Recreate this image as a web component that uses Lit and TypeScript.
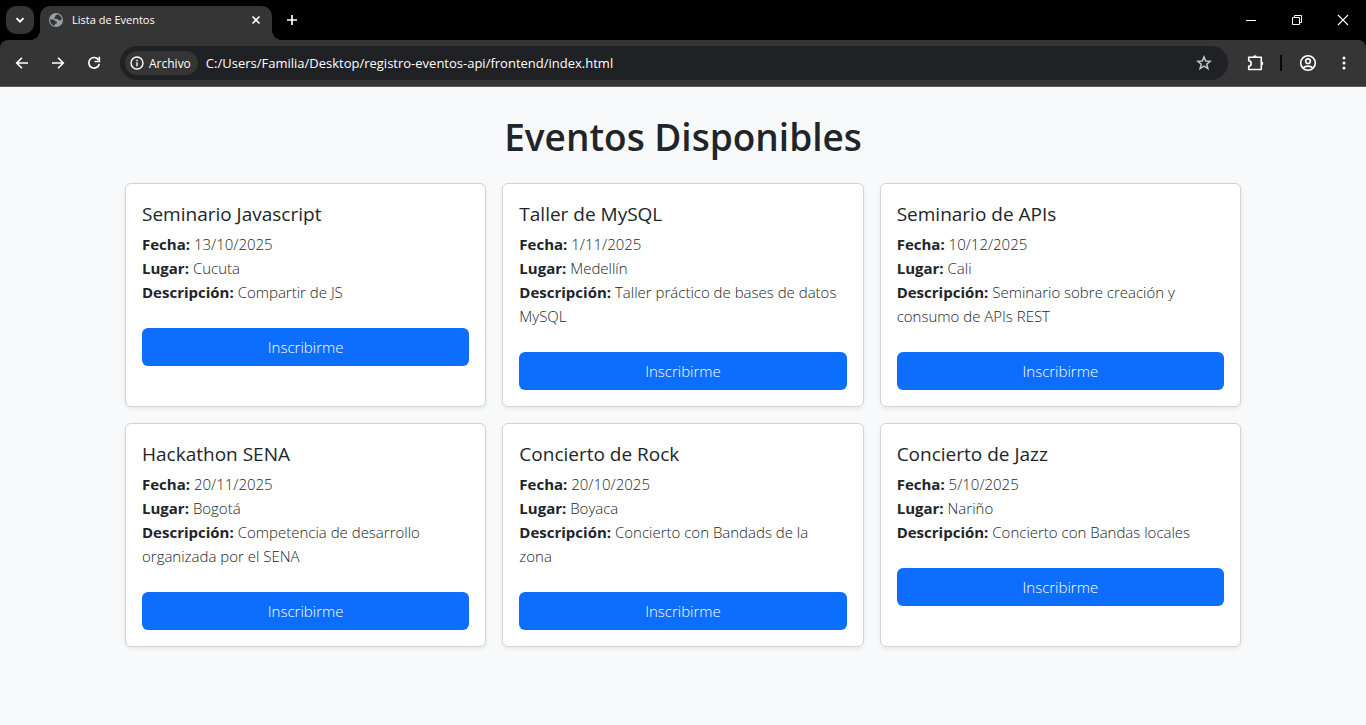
import { LitElement, html, css, svg } from "lit";
import { customElement, property } from "lit/decorators.js";

interface Evento {
  nombre: string;
  fecha: string;
  lugar: string;
  descripcion: string;
}

const EVENTOS: Evento[] = [
  { nombre: "Seminario Javascript", fecha: "13/10/2025", lugar: "Cucuta", descripcion: "Compartir de JS" },
  { nombre: "Taller de MySQL", fecha: "1/11/2025", lugar: "Medellín", descripcion: "Taller práctico de bases de datos MySQL" },
  { nombre: "Seminario de APIs", fecha: "10/12/2025", lugar: "Cali", descripcion: "Seminario sobre creación y consumo de APIs REST" },
  { nombre: "Hackathon SENA", fecha: "20/11/2025", lugar: "Bogotá", descripcion: "Competencia de desarrollo organizada por el SENA" },
  { nombre: "Concierto de Rock", fecha: "20/10/2025", lugar: "Boyaca", descripcion: "Concierto con Bandads de la zona" },
  { nombre: "Concierto de Jazz", fecha: "5/10/2025", lugar: "Nariño", descripcion: "Concierto con Bandas locales" },
];

const icon = (size: number, body: unknown) => html`<svg
  width=${size} height=${size} viewBox="0 0 ${size} ${size}"
  fill="none" stroke="currentColor" aria-hidden="true">${body}</svg>`;

const ICONS = {
  chevron: icon(16, svg`<path d="M4.5 6.2 8 9.7l3.5-3.5" stroke-width="1.9"/>`),
  globe: icon(16, svg`<circle cx="8" cy="8" r="7" fill="#9aa0a6" stroke="none"/>
    <path d="M2 7.4h2.600c1.600 0 2.600.8 2.800 2.200h1.300v2.200H6.900v1.900C4 13.200 1.900 10.800 2 7.400Z M7.200 3.800 9.600 2.300c2 .6 3.500 2.200 4.100 4.200l-.5 1.800h-2.400l-1.400-1.400H7.200L6 5.600l1.200-.4Z" fill="#353535" stroke="none"/>`),
  close: icon(16, svg`<path d="m4.500 4.500 7 7m0-7-7 7" stroke-width="1.600"/>`),
  plus: icon(16, svg`<path d="M8 3v10M3 8h10" stroke-width="1.700"/>`),
  minimize: icon(16, svg`<path d="M3 8.500h10"/>`),
  restore: icon(16, svg`<path d="M3.500 5.500h7v7h-7zM5.500 5.500v-2h7v7h-2"/>`),
  closeWindow: icon(16, svg`<path d="m3 3 10 10M13 3 3 13" stroke-width="1.100"/>`),
  back: icon(16, svg`<path d="M14 8H3M8 2.700 2.700 8 8 13.300" stroke-width="1.600"/>`),
  forward: icon(16, svg`<path d="M2 8h11M8 2.700 13.300 8 8 13.300" stroke-width="1.600"/>`),
  reload: icon(16, svg`<path d="M12.600 5A5.300 5.300 0 1 0 13.300 8.800" stroke-width="1.700"/><path d="M13.300 1.800v4.700H8.600" stroke-width="1.700"/>`),
  info: icon(14, svg`<circle cx="7" cy="7" r="6" stroke-width="1.400"/><path d="M7 6.200V10.300M7 3.700v1.500" stroke-width="1.400"/>`),
  star: icon(16, svg`<path d="m8 1.900 1.700 4.100 4.500.3-3.500 2.900 1.200 4.400L8 11.200l-3.900 2.400 1.200-4.400-3.500-2.900 4.500-.3Z" stroke-width="1.500"/>`),
  puzzle: icon(20, svg`<path d="M3.700 4.300H16.300V16.500H3.700V13.200C5.200 13 6.200 11.900 6.200 10.400S5.200 7.800 3.700 7.600Z" stroke-width="1.600" stroke-linejoin="round"/>
    <path d="M8 4.300a2 2 0 0 1 4 0ZM16.300 8.400a2 2 0 0 1 0 4Z" fill="currentColor" stroke="none"/>`),
  profile: icon(18, svg`<circle cx="9" cy="9" r="7.300" stroke-width="1.600"/><circle cx="9" cy="7.200" r="2.300" stroke-width="1.600"/><path d="M3.900 14c2.900-2.500 7.300-2.500 10.200 0" stroke-width="1.600"/>`),
  menu: icon(16, svg`<g fill="currentColor" stroke="none"><circle cx="8" cy="2.900" r="1.500"/><circle cx="8" cy="8" r="1.500"/><circle cx="8" cy="13.100" r="1.500"/></g>`),
};

@customElement("browser-chrome")
class BrowserChrome extends LitElement {
  static styles = css`
    :host { display: block; color: #fff; background: #000; font-family: "Open Sans", "Noto Sans", sans-serif; }
    svg { display: block; flex: none; }
    button { display: grid; place-items: center; padding: 0; border: 0; background: none; color: inherit; font: inherit; }
    .strip { display: flex; align-items: center; height: 40px; padding-left: 6px; }
    .search { width: 28px; height: 28px; border-radius: 10px; background: #353535; }
    .tab { position: relative; display: flex; align-items: center; align-self: flex-end; gap: 8px; width: 232px; height: 34px; box-sizing: border-box; margin-left: 6px; padding: 0 8px 6px; border-radius: 10px 10px 0 0; background: #353535; }
    .tab::before, .tab::after { content: ""; position: absolute; bottom: 0; width: 10px; height: 10px; }
    .tab::before { right: 100%; background: radial-gradient(circle at 0 0, transparent 10px, #353535 10px); }
    .tab::after { left: 100%; background: radial-gradient(circle at 100% 0, transparent 10px, #353535 10px); }
    .name { flex: 1; font-size: 11px; line-height: 16px; }
    .add { width: 28px; height: 28px; margin-left: 6px; }
    .window { display: flex; margin-left: auto; }
    .window button { width: 46px; height: 40px; }
    .bar { display: flex; align-items: center; height: 46px; border-bottom: 1px solid #5a5a5a; border-radius: 8px 8px 0 0; background: #353535; }
    .nav { display: flex; gap: 8px; padding: 0 12px 0 8px; }
    .nav button, .tools button { width: 28px; height: 28px; }
    .address { display: flex; flex: 1; align-items: center; gap: 8px; height: 34px; padding: 0 16px 0 5px; border-radius: 17px; background: #202124; }
    .origin { display: flex; align-items: center; gap: 5px; height: 24px; padding: 0 7px 0 5px; border-radius: 12px; background: #353535; font-size: 12px; font-weight: 500; }
    .url { flex: 1; min-width: 0; padding: 0; border: 0; outline: 0; background: none; color: #fff; font: 13px/20px "Open Sans", "Noto Sans", sans-serif; }
    .star { color: #c7c7c7; }
    .tools { display: flex; align-items: center; padding: 0 8px 0 13px; }
    .rule { width: 2px; height: 16px; margin: 0 12px 0 11px; background: #080808; }
    .tools .more { margin-left: 8px; }
  `;

  render() {
    return html`
      <div class="strip">
        <button class="search" aria-label="Buscar pestañas">${ICONS.chevron}</button>
        <div class="tab">
          ${ICONS.globe}<span class="name">Lista de Eventos</span>
          <button aria-label="Cerrar pestaña">${ICONS.close}</button>
        </div>
        <button class="add" aria-label="Nueva pestaña">${ICONS.plus}</button>
        <div class="window">
          <button aria-label="Minimizar">${ICONS.minimize}</button>
          <button aria-label="Restaurar">${ICONS.restore}</button>
          <button aria-label="Cerrar">${ICONS.closeWindow}</button>
        </div>
      </div>
      <div class="bar">
        <div class="nav">
          <button aria-label="Atrás">${ICONS.back}</button>
          <button aria-label="Adelante">${ICONS.forward}</button>
          <button aria-label="Recargar">${ICONS.reload}</button>
        </div>
        <div class="address">
          <button class="origin">${ICONS.info}<span>Archivo</span></button>
          <input class="url" type="text" aria-label="Dirección" spellcheck="false"
            .value=${"C:/Users/Familia/Desktop/registro-eventos-api/frontend/index.html"} />
          <button class="star" aria-label="Favorito">${ICONS.star}</button>
        </div>
        <div class="tools">
          <button aria-label="Extensiones">${ICONS.puzzle}</button>
          <span class="rule"></span>
          <button aria-label="Perfil">${ICONS.profile}</button>
          <button class="more" aria-label="Menú">${ICONS.menu}</button>
        </div>
      </div>
    `;
  }
}

@customElement("event-card")
class EventCard extends LitElement {
  @property({ attribute: false }) evento!: Evento;

  static styles = css`
    :host { display: block; box-sizing: border-box; padding: 16px; border: 1px solid #d2d3d4; border-radius: 6px; background: #fff; box-shadow: 0 2px 4px rgba(0, 0, 0, 0.075); }
    .title { margin: 0 0 4px; font-size: 19px; line-height: 28px; font-weight: 500; }
    .text { margin: 0 0 24px; padding-right: 4px; font-size: 15px; line-height: 24px; font-weight: 350; }
    .text strong { font-weight: 700; }
    .join { display: block; width: 100%; height: 38px; padding: 0; border: 0; border-radius: 6px; background: #0d6efd; color: #fff; font: inherit; font-size: 15px; font-weight: 350; }
  `;

  render() {
    const { nombre, fecha, lugar, descripcion } = this.evento;
    return html`
      <h2 class="title">${nombre}</h2>
      <p class="text">
        <strong>Fecha:</strong> ${fecha}<br />
        <strong>Lugar:</strong> ${lugar}<br />
        <strong>Descripción:</strong> ${descripcion}
      </p>
      <button class="join">Inscribirme</button>
    `;
  }
}

@customElement("app-root")
class AppRoot extends LitElement {
  static styles = css`
    :host { display: flex; flex-direction: column; min-height: 100vh; background: #f8f9fa; color: #212529; font-family: "Open Sans", "Noto Sans", sans-serif; }
    .page { width: 100%; max-width: 1140px; box-sizing: border-box; margin: 0 auto; padding: 24px 12px; }
    .heading { margin: 0 0 20px; font-size: 37px; line-height: 52px; font-weight: 600; text-align: center; }
    .grid { display: grid; grid-template-columns: repeat(3, minmax(0, 1fr)); gap: 16px; }
    @media (max-width: 767px) { .grid { grid-template-columns: 1fr; } }
  `;

  render() {
    return html`
      <browser-chrome></browser-chrome>
      <main class="page">
        <h1 class="heading">Eventos Disponibles</h1>
        <div class="grid">${EVENTOS.map((e) => html`<event-card .evento=${e}></event-card>`)}</div>
      </main>
    `;
  }
}
